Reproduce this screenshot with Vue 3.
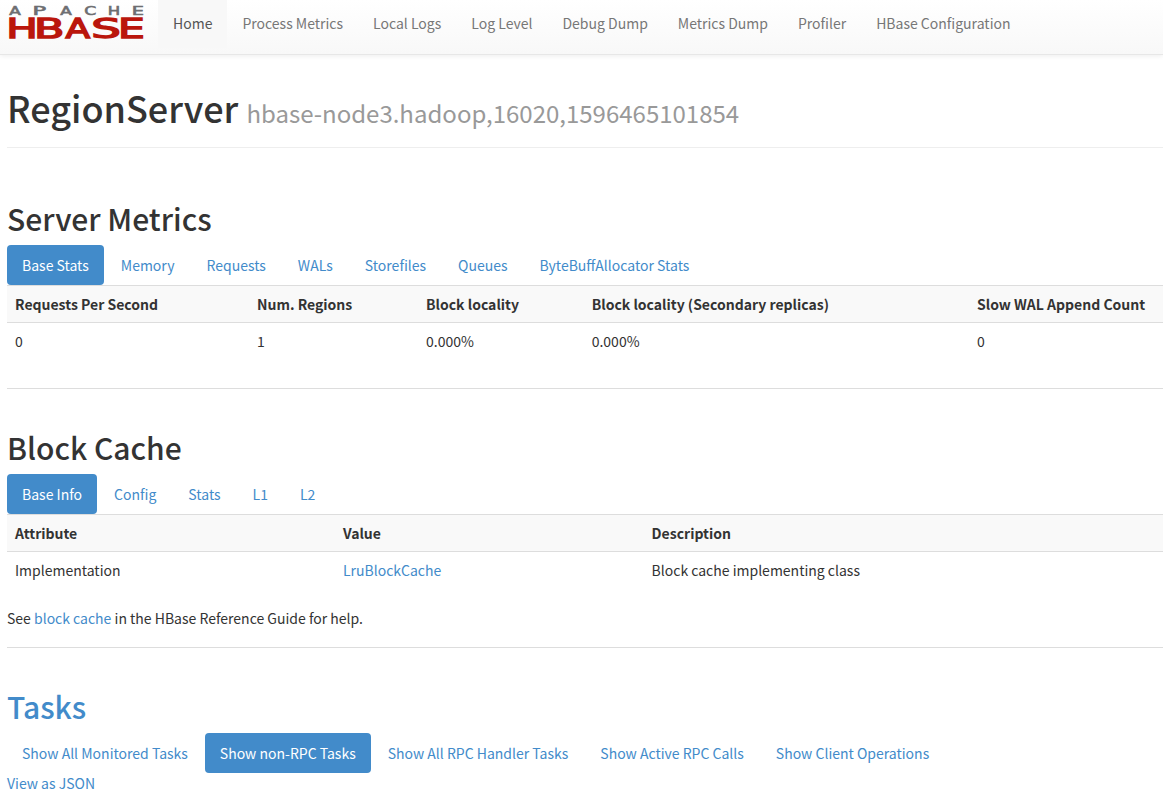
<script setup>
const nav = ['Home', 'Process Metrics', 'Local Logs', 'Log Level', 'Debug Dump', 'Metrics Dump', 'Profiler', 'HBase Configuration']
const statTabs = ['Base Stats', 'Memory', 'Requests', 'WALs', 'Storefiles', 'Queues', 'ByteBuffAllocator Stats']
const stats = [
  ['Requests Per Second', '0'],
  ['Num. Regions', '1'],
  ['Block locality', '0.000%'],
  ['Block locality (Secondary replicas)', '0.000%'],
  ['Slow WAL Append Count', '0'],
]
const cacheTabs = ['Base Info', 'Config', 'Stats', 'L1', 'L2']
const taskTabs = ['Show All Monitored Tasks', 'Show non-RPC Tasks', 'Show All RPC Handler Tasks', 'Show Active RPC Calls', 'Show Client Operations']
// Wordmark letters: character, x, advance width
const apache = [['A', 9.3, 11.5], ['P', 32.4, 13.6], ['A', 60.3, 11.5], ['C', 84.3, 12], ['H', 107.8, 12.4], ['E', 131.7, 12.2]]
const hbase = [['H', 6.2, 31.6], ['B', 34, 30.5], ['A', 65.6, 24.6], ['S', 91.2, 29.6], ['E', 118, 26.8]]
</script>

<template>
  <div class="page">
    <header class="navbar">
      <a class="brand">
        <svg width="151" height="48" viewBox="0 0 151 48" aria-label="Apache HBase">
          <text v-for="([c, x, w], i) in apache" :key="'a' + i" class="apache" :x="x" y="14.8" :textLength="w" lengthAdjust="spacingAndGlyphs">{{ c }}</text>
          <text v-for="([c, x, w], i) in hbase" :key="'h' + i" class="hbase" :x="x" y="38.2" :textLength="w" lengthAdjust="spacingAndGlyphs">{{ c }}</text>
        </svg>
      </a>
      <nav>
        <a v-for="(n, i) in nav" :key="n" :class="{ active: i === 0 }">{{ n }}</a>
      </nav>
    </header>

    <main>
      <div class="title"><h1>RegionServer <small>hbase-node3.hadoop,16020,1596465101854</small></h1></div>

      <section class="metrics">
        <h2>Server Metrics</h2>
        <div class="pills"><a v-for="(t, i) in statTabs" :key="t" :class="{ active: i === 0 }">{{ t }}</a></div>
        <table class="stats">
          <colgroup><col class="s1"><col class="s2"><col class="s3"><col class="s4"><col></colgroup>
          <tbody>
            <tr><th v-for="s in stats" :key="s[0]">{{ s[0] }}</th></tr>
            <tr><td v-for="s in stats" :key="s[0]">{{ s[1] }}</td></tr>
          </tbody>
        </table>
      </section>

      <section class="cache">
        <h2>Block Cache</h2>
        <div class="pills"><a v-for="(t, i) in cacheTabs" :key="t" :class="{ active: i === 0 }">{{ t }}</a></div>
        <table>
          <colgroup><col class="c1"><col class="c2"><col></colgroup>
          <tbody>
            <tr><th>Attribute</th><th>Value</th><th>Description</th></tr>
            <tr><td>Implementation</td><td><a>LruBlockCache</a></td><td>Block cache implementing class</td></tr>
          </tbody>
        </table>
        <p>See <a>block cache</a> in the HBase Reference Guide for help.</p>
      </section>

      <section class="tasks">
        <h2><a>Tasks</a></h2>
        <div class="pills"><a v-for="(t, i) in taskTabs" :key="t" :class="{ active: i === 1 }">{{ t }}</a></div>
        <a>View as JSON</a>
      </section>
    </main>
  </div>
</template>

<style>
body { margin: 0; overflow: hidden; background: #fff; }
</style>

<style scoped>
* { box-sizing: border-box; }
.page {
  height: 796px;
  overflow: hidden;
  color: #333;
  font: 14px/20px "Noto Sans CJK SC", "Noto Sans", sans-serif;
}
a { color: #428bca; }
.navbar {
  display: flex;
  align-items: flex-start;
  height: 55px;
  background: linear-gradient(#fff, #f8f8f8);
  border-bottom: 1px solid #e7e7e7;
  box-shadow: 0 1px 5px rgba(0, 0, 0, .075);
}
.brand { width: 158px; height: 48px; }
.brand svg { display: block; }
.apache { font: 11.4px "DejaVu Sans", sans-serif; fill: #6d6e71; stroke: #6d6e71; stroke-width: .6; }
.hbase { font: 26.8px "DejaVu Sans", sans-serif; fill: #ba160c; stroke: #ba160c; stroke-width: 1.4; }
nav { display: flex; white-space: nowrap; }
nav a { padding: 13px 15px 15px; color: #777; }
nav .active { color: #555; background: #f8f8f8; }
main { padding-left: 7px; }
.title { height: 93px; padding-top: 33px; border-bottom: 1px solid #eee; }
h1, h2 { margin: 0; font-weight: 500; line-height: 1.1; white-space: nowrap; }
h1 { font-size: 36px; }
h1 small { font-size: 24px; font-weight: 400; line-height: 1; color: #999; }
h2 { height: 43px; font-size: 30px; }
.metrics { height: 241px; padding-top: 54px; border-bottom: 1px solid #ddd; }
.cache { height: 259px; padding-top: 42px; border-bottom: 1px solid #ddd; }
.tasks { padding-top: 42px; }
.pills { display: flex; gap: 2px; white-space: nowrap; }
.pills a { padding: 10px 15px; border-radius: 4px; }
.pills .active { color: #fff; background: #428bca; }
table { width: 100%; table-layout: fixed; border-collapse: collapse; }
th, td { padding: 8px; border-top: 1px solid #ddd; text-align: left; white-space: nowrap; }
th { font-weight: 700; background: #f9f9f9; }
.s1 { width: 242px; }
.s2 { width: 169px; }
.s3 { width: 165.7px; }
.s4 { width: 385.3px; }
.c1 { width: 328px; }
.c2 { width: 308.6px; }
p { margin: 20px 0 0; }
</style>
